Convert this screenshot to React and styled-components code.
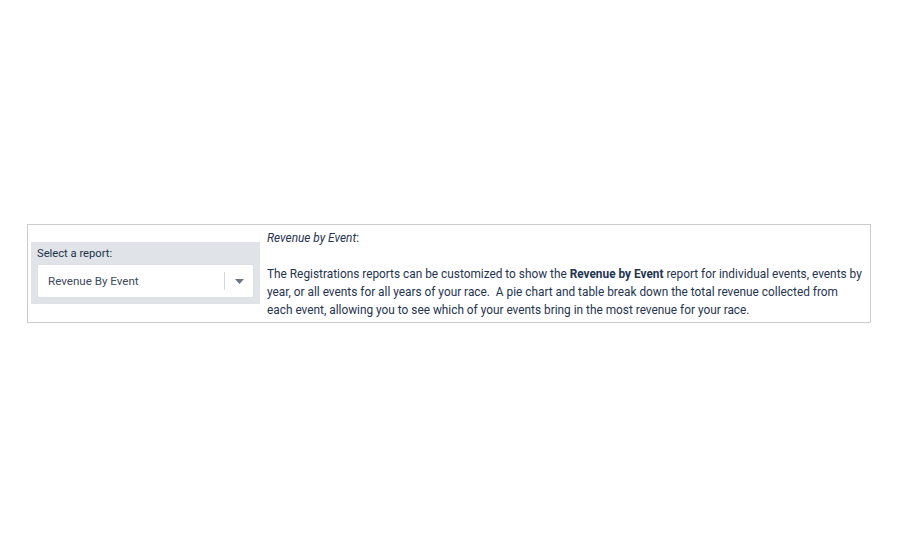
import React from "react";
import styled, { createGlobalStyle } from "styled-components";

const GlobalStyle = createGlobalStyle`
	body {
		margin: 0;
		background: #ffffff;
		font-family: Roboto, "Liberation Sans", sans-serif;
	}
`;

const Page = styled.div`
	width: 900px;
	height: 550px;
	padding: 224px 0 0 27px;
	box-sizing: border-box;
`;

const Frame = styled.div`
	width: 844px;
	box-sizing: border-box;
	border: 1px solid #c9ccd0;
	display: flex;
	gap: 7px;
	padding: 0 3px 3px 3px;
`;

const SelectPanel = styled.div`
	flex: none;
	width: 229px;
	height: 62px;
	margin-top: 17px;
	box-sizing: border-box;
	background: #e0e3e7;
	padding: 5px 6px 0 6px;
`;

const Label = styled.div`
	font-size: 11.2px;
	line-height: 14px;
	color: #1c324c;
	margin-bottom: 3px;
`;

const SelectBox = styled.div`
	height: 34px;
	box-sizing: border-box;
	background: #ffffff;
	border: 1px solid #dcdfe3;
	border-radius: 2px;
	display: flex;
	align-items: center;
	padding-left: 10px;
	font-size: 11.6px;
	color: #3b4a5c;
`;

const SelectValue = styled.span`
	flex: 1;
`;

const Divider = styled.span`
	width: 1px;
	height: 18px;
	background: #d4d7db;
`;

const Caret = styled.span`
	width: 28px;
	display: flex;
	justify-content: center;
	align-items: center;
`;

const Description = styled.div`
	flex: 1;
	padding: 4px 3px 0 0;
	font-size: 11.85px;
	line-height: 18px;
	color: #1f3550;
`;

const Title = styled.div`
	margin-bottom: 18px;
	em {
		font-style: italic;
	}
`;

const Paragraph = styled.p`
	margin: 0;
	b {
		font-weight: 700;
	}
`;

export default function App() {
	return (
		<>
			<GlobalStyle />
			<Page>
				<Frame>
					<SelectPanel>
						<Label>Select a report:</Label>
						<SelectBox>
							<SelectValue>Revenue By Event</SelectValue>
							<Divider />
							<Caret>
								<svg width="9" height="5" viewBox="0 0 9 5">
									<path d="M0 0 L9 0 L4.5 5 Z" fill="#6b7480" />
								</svg>
							</Caret>
						</SelectBox>
					</SelectPanel>
					<Description>
						<Title>
							<em>Revenue by Event</em>:
						</Title>
						<Paragraph>
							The Registrations reports can be customized to show the <b>Revenue by Event</b> report
							for individual events, events by year, or all events for all years of your race.&nbsp; A
							pie chart and table break down the total revenue collected from each event, allowing you
							to see which of your events bring in the most revenue for your race.
						</Paragraph>
					</Description>
				</Frame>
			</Page>
		</>
	);
}
